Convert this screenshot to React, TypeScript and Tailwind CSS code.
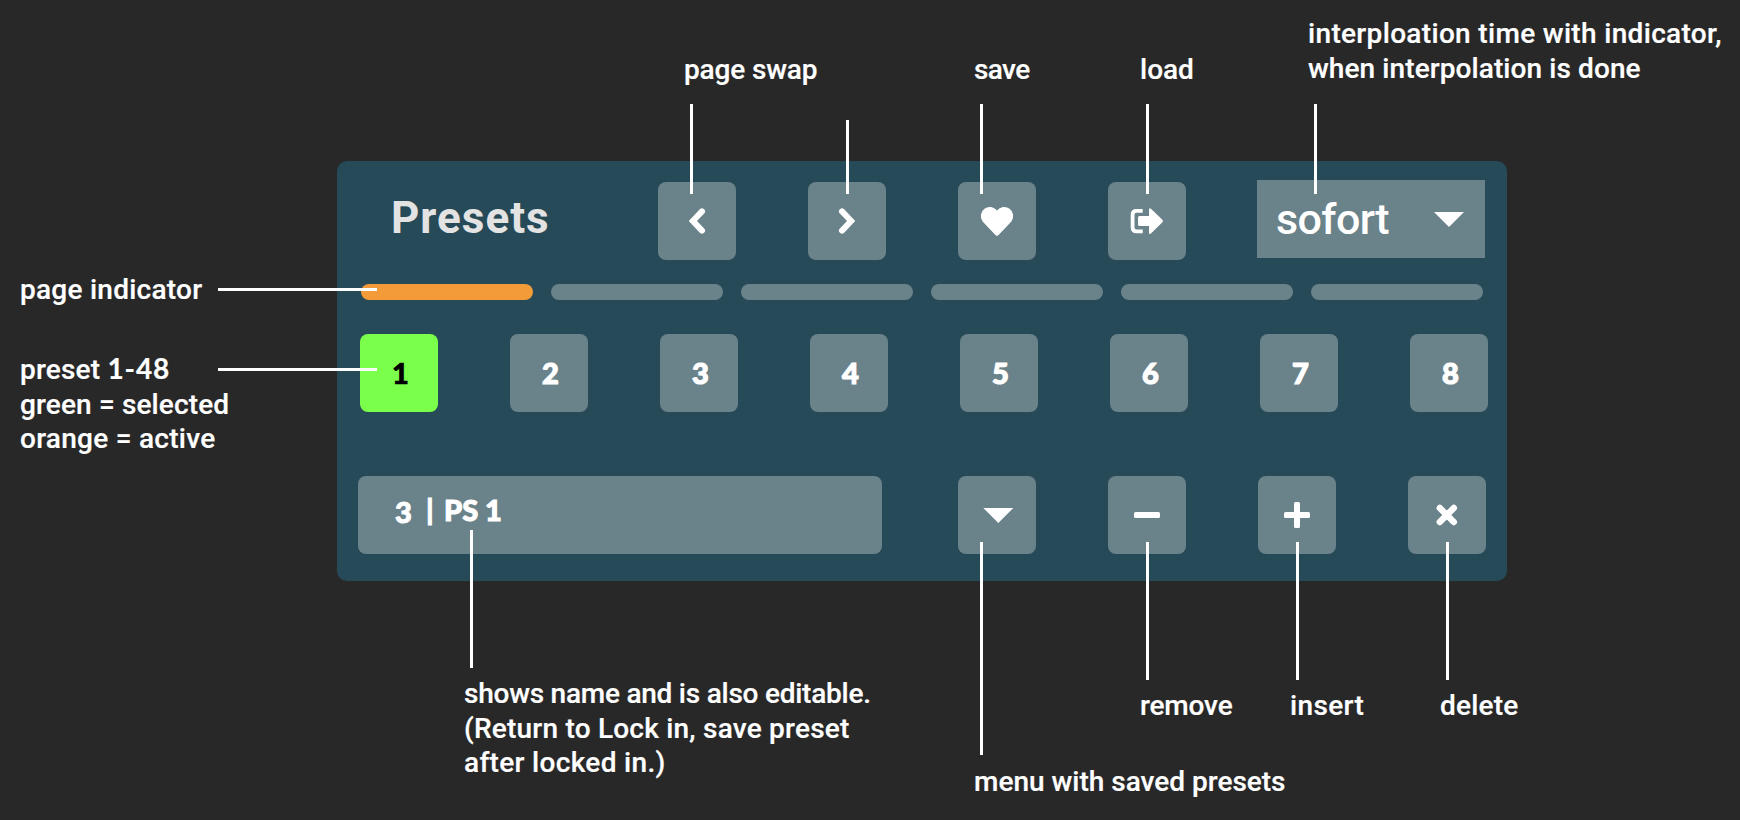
import type { ReactNode } from "react";

interface NoteProps {
  className: string;
  children: ReactNode;
}

const PAGES = [1, 2, 3, 4, 5, 6];
const PRESETS = [1, 2, 3, 4, 5, 6, 7, 8];

// leader lines from the notes to the controls
const LINES = [
  "left-[690px] top-[104px] h-[90px] w-[3px]",
  "left-[846px] top-[120px] h-[74px] w-[3px]",
  "left-[980px] top-[104px] h-[90px] w-[3px]",
  "left-[1146px] top-[104px] h-[90px] w-[3px]",
  "left-[1314px] top-[104px] h-[90px] w-[3px]",
  "left-[218px] top-[288px] h-[3px] w-[159px]",
  "left-[218px] top-[368px] h-[3px] w-[159px]",
  "left-[470px] top-[530px] h-[138px] w-[3px]",
  "left-[980px] top-[542px] h-[213px] w-[3px]",
  "left-[1146px] top-[542px] h-[138px] w-[3px]",
  "left-[1296px] top-[542px] h-[138px] w-[3px]",
  "left-[1446px] top-[542px] h-[138px] w-[3px]",
];

function Note({ className, children }: NoteProps) {
  return (
    <div className={`absolute whitespace-nowrap text-[28px] leading-[34.6px] font-medium text-white [-webkit-text-stroke:0.2px_white] ${className}`}>
      {children}
    </div>
  );
}

function IconButton({ label, children }: { label: string; children: ReactNode }) {
  return (
    <button aria-label={label} className="size-[78px] shrink-0 rounded-lg bg-[#6a828a]">
      <svg viewBox="0 0 78 78" className="size-full" fill="white">
        {children}
      </svg>
    </button>
  );
}

export default function App() {
  return (
    <div className="relative h-[820px] w-[1740px] overflow-hidden bg-[#282828] pt-[161px] pl-[337px] font-['Roboto',sans-serif]">
      <section className="flex h-[420px] w-[1170px] flex-col rounded-[10px] bg-[#264a58] pt-[21px]">
        <div className="flex h-[78px] pl-[54px]">
          <h1 className="w-[267px] pt-[10px] text-[44px] leading-[52px] font-bold tracking-[1px] text-[#e3e3e3]">
            Presets
          </h1>
          <div className="flex gap-[72px]">
            <IconButton label="Previous page">
              <path d="M44 29.4 34.9 39 44 48.6" fill="none" stroke="white" strokeWidth="6" strokeLinecap="round" />
            </IconButton>
            <IconButton label="Next page">
              <path d="M34 29.4 43.1 39 34 48.6" fill="none" stroke="white" strokeWidth="6" strokeLinecap="round" />
            </IconButton>
            <IconButton label="Save">
              <path d="M24.6 39.4A9 9 0 0 1 39 28.6 9 9 0 0 1 53.4 39.4L40.6 53.1Q39 54.7 37.4 53.1Z" />
            </IconButton>
            <IconButton label="Load">
              <path d="M34.7 28.9H28.5Q24.6 28.9 24.6 32.8V45.5Q24.6 49.4 28.5 49.4H34.7" fill="none" stroke="white" strokeWidth="3.8" />
              <path d="M31.5 34H41V27.8Q41 25.2 43.2 27L54.4 37.8Q55.6 39 54.4 40.2L43.2 51.2Q41 53 41 50.4V44H31.5Q30 44 30 42.5V35.5Q30 34 31.5 34Z" />
            </IconButton>
          </div>
          <button className="-mt-0.5 ml-[71px] flex h-[78px] w-[228px] items-center justify-between bg-[#6a828a] pr-[21px] pl-[19px] text-[43px] font-medium tracking-[-0.6px] text-white">
            <span className="pt-px">sofort</span>
            <svg viewBox="0 0 30 15" className="h-[15px] w-[30px]" fill="white">
              <path d="M0 0H30L15 15Z" />
            </svg>
          </button>
        </div>

        <div className="mt-6 ml-6 flex gap-[18px]">
          {PAGES.map((page) => (
            <div
              key={page}
              className={`h-4 w-[172px] rounded-full ${page === 1 ? "bg-[#f29b38]" : "bg-[#6a828a]"}`}
            />
          ))}
        </div>

        <div className="mt-[34px] ml-[23px] flex gap-[72px]">
          {PRESETS.map((preset) => (
            <button
              key={preset}
              className={`size-[78px] rounded-lg pl-[3px] font-['Lato',sans-serif] text-[29px] font-black ${
                preset === 1
                  ? "bg-[#7aff4b] text-black [-webkit-text-stroke:0.7px_black]"
                  : "bg-[#6a828a] text-white [-webkit-text-stroke:1.2px_white]"
              }`}
            >
              {preset}
            </button>
          ))}
        </div>

        <div className="mt-16 ml-[21px] flex">
          <div className="mr-[76px] flex h-[78px] w-[524px] rounded-lg bg-[#6a828a] pl-[37px] font-['Lato',sans-serif] text-[29px] leading-9 font-black text-white [-webkit-text-stroke:1px_white]">
            <span className="w-[31px] pt-[18px]">3</span>
            <span className="w-[18px] pt-[15px]">|</span>
            <span className="pt-4">PS 1</span>
          </div>
          <div className="flex gap-[72px]">
            <IconButton label="Saved presets">
              <path d="M25.3 32H55.3L40.3 47Z" />
            </IconButton>
            <IconButton label="Remove">
              <rect x="26" y="36" width="26" height="6" rx="1.5" />
            </IconButton>
            <IconButton label="Insert">
              <rect x="26" y="36" width="26" height="6" rx="1.5" />
              <rect x="36" y="26" width="6" height="26" rx="1.5" />
            </IconButton>
            <IconButton label="Delete">
              <path d="M31.8 32 45.8 46M45.8 32 31.8 46" stroke="white" strokeWidth="6.4" strokeLinecap="round" />
            </IconButton>
          </div>
        </div>
      </section>

      {LINES.map((line) => (
        <div key={line} className={`absolute bg-white ${line}`} />
      ))}

      <Note className="top-[53px] left-[684px] tracking-[-0.15px]">page swap</Note>
      <Note className="top-[53px] left-[974px] tracking-[-0.6px]">save</Note>
      <Note className="top-[53px] left-[1140px]">load</Note>
      <Note className="top-[17px] left-[1308px]">
        <span className="tracking-[0.33px]">interploation time with indicator,</span>
        <br />
        <span className="tracking-[0.09px]">when interpolation is done</span>
      </Note>
      <Note className="top-[273px] left-[20px] tracking-[0.25px]">page indicator</Note>
      <Note className="top-[351px] left-[20px] tracking-[0.2px]">
        preset <span className="font-['Lato',sans-serif] font-bold tracking-[0.9px]">1-48</span>
        <br />
        <span className="tracking-[0.14px]">green = selected</span>
        <br />
        <span className="tracking-[0.27px]">orange = active</span>
      </Note>
      <Note className="top-[677px] left-[464px]">
        <span className="tracking-[-0.24px]">shows name and is also editable.</span>
        <br />
        <span className="tracking-[0.22px]">(Return to Lock in, save preset</span>
        <br />
        <span className="tracking-[0.32px]">after locked in.)</span>
      </Note>
      <Note className="top-[765px] left-[974px]">menu with saved presets</Note>
      <Note className="top-[689px] left-[1140px] tracking-[-0.15px]">remove</Note>
      <Note className="top-[689px] left-[1290px] tracking-[0.35px]">insert</Note>
      <Note className="top-[689px] left-[1440px] tracking-[0.2px]">delete</Note>
    </div>
  );
}
